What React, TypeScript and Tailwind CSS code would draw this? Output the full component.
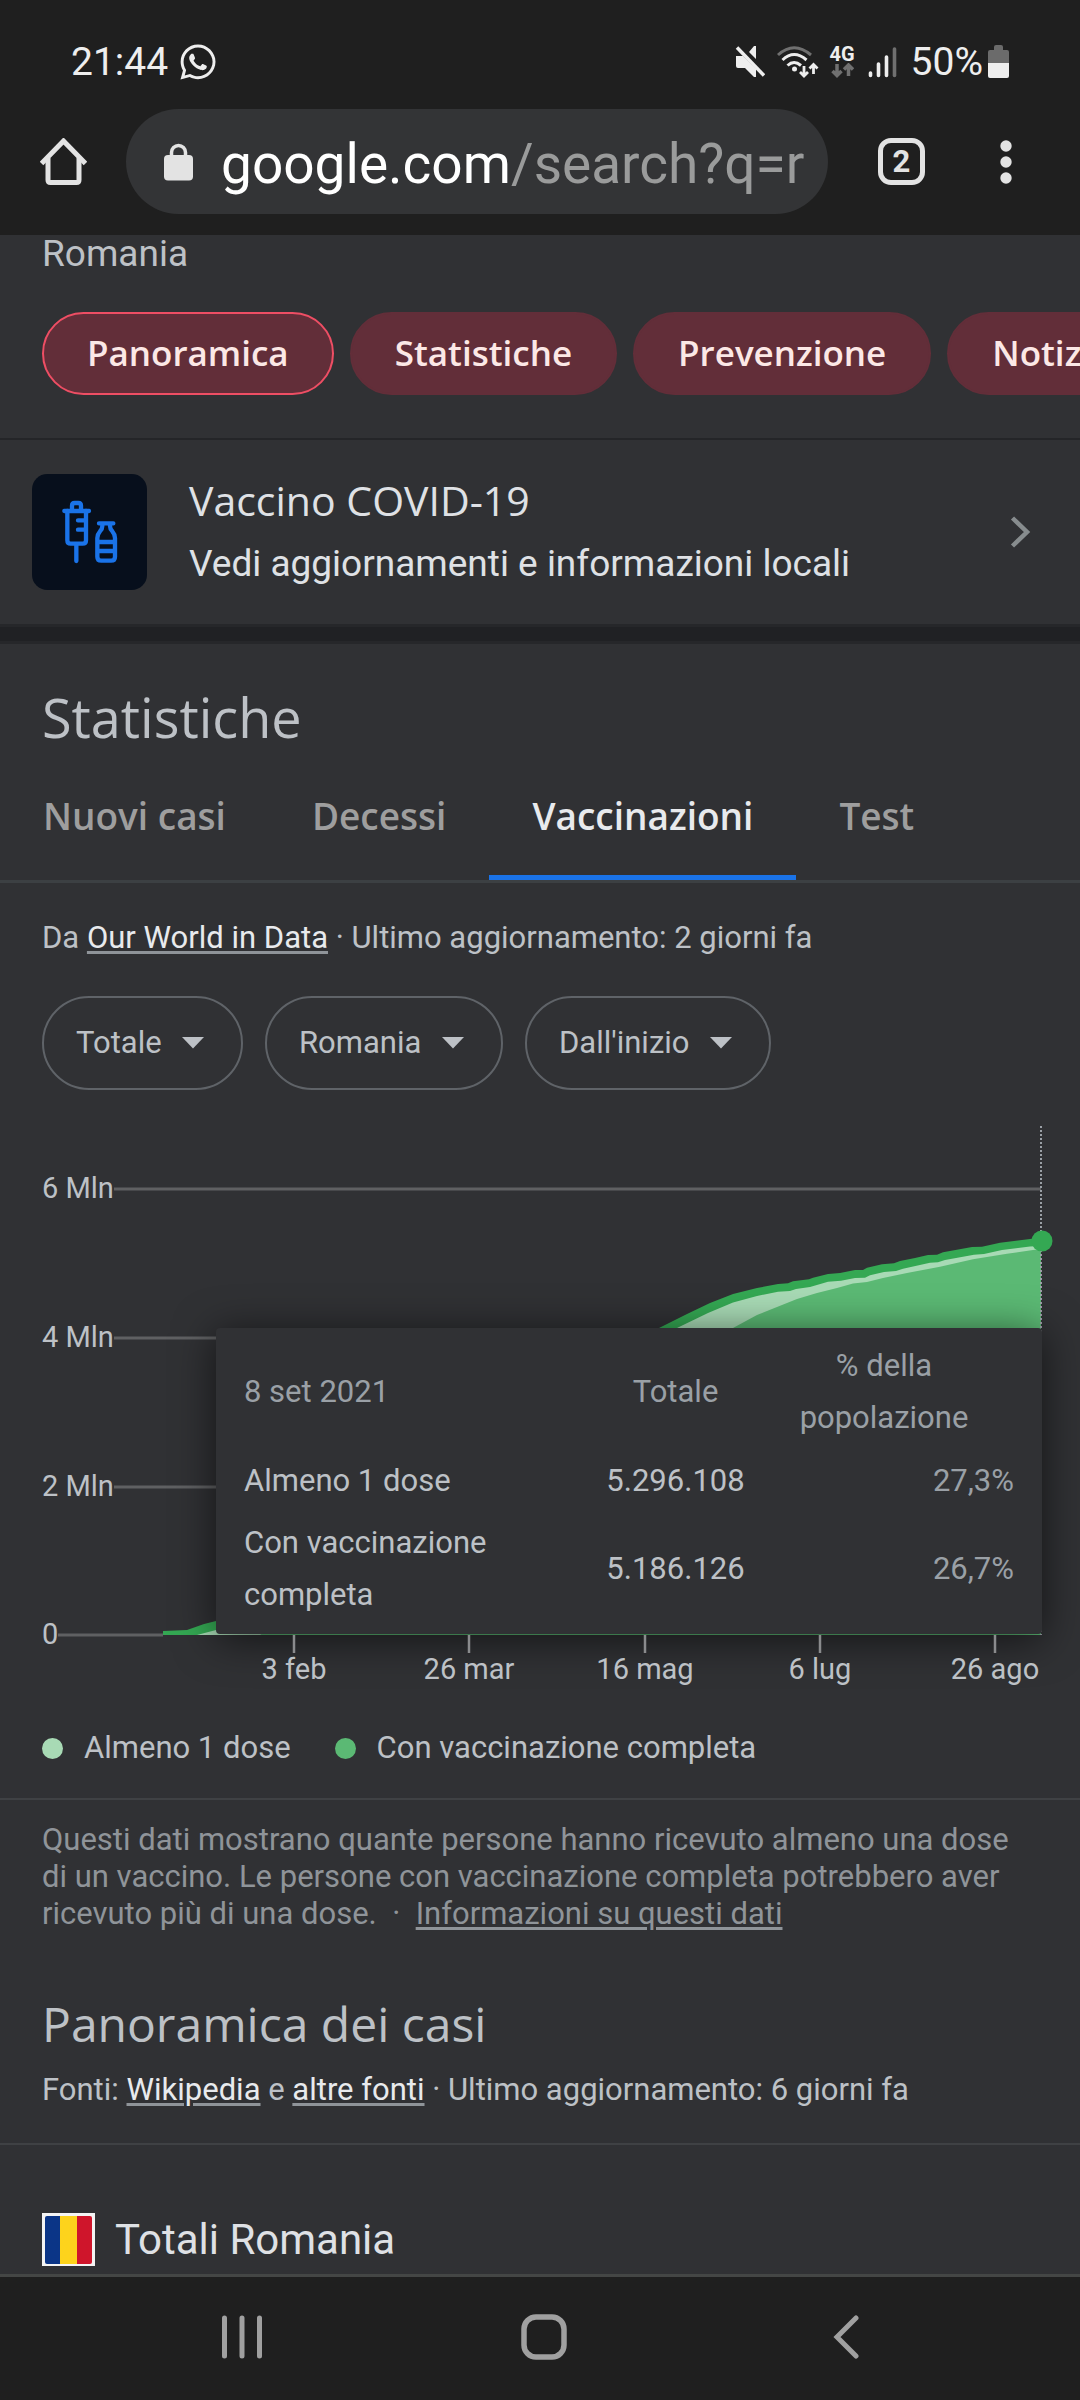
import React from 'react';
import { FaWhatsapp } from 'react-icons/fa';

const chips = ['Panoramica', 'Statistiche', 'Prevenzione', 'Notizie'];
const tabs = ['Nuovi casi', 'Decessi', 'Vaccinazioni', 'Test'];
const filters = [
  { label: 'Metrica', value: 'Totale' },
  { label: 'Area', value: 'Romania' },
  { label: 'Periodo', value: "Dall'inizio" },
];
const gridLines = [
  { label: '6 Mln', y: 99, x: 114 },
  { label: '4 Mln', y: 248, x: 114 },
  { label: '2 Mln', y: 397, x: 114 },
];
const ticks = [
  { label: '3 feb', x: 294 },
  { label: '26 mar', x: 469 },
  { label: '16 mag', x: 645 },
  { label: '6 lug', x: 820 },
  { label: '26 ago', x: 995 },
];

const StatusBar: React.FC = () => (
  <div className="flex items-center pt-10 pb-[25px] pl-[71px] pr-[71px] text-[39px] leading-11 text-[#eeeeee]">
    <span>21:44</span>
    <FaWhatsapp size={40} className="ml-[10px]" />
    <div className="ml-auto flex items-center">
      <svg width="30" height="34" viewBox="736 44 30 34" fill="currentColor">
        <path d="M737 55h7l13 13v8h-2l-9-9h-7a2 2 0 0 1-2-2zM757 45v13l-7-7 5-6z" />
        <path d="M738 46.500l27 28" stroke="currentColor" strokeWidth="3.500" />
      </svg>
      <svg className="ml-3" width="42" height="34" viewBox="778 44 42 34" fill="none" stroke="currentColor" strokeWidth="3">
        <path d="M779 54q16-14.500 33 0" stroke="#707070" />
        <path d="M783.500 59q11.500-11 24 0M788.500 64.500q6.500-6 13.500 0" />
        <circle cx="795.500" cy="68" r="2.500" fill="currentColor" stroke="none" />
        <path d="M805 65v9M801 71l4 4 4-4M814.500 73v-9M810.500 67.500l4-4 4 4" strokeWidth="2.800" />
      </svg>
      <div className="ml-[10px] flex flex-col items-center">
        <span className="text-[20px] font-bold leading-[17px]">4G</span>
        <svg width="24" height="16" viewBox="830 64 24 16" fill="none" stroke="#707070" strokeWidth="3.500">
          <path d="M837 65v11M832.500 72l4.500 4.500 4.500-4.500M848.500 77v-10M844 70.500l4.500-4.500 4.500 4.500" />
        </svg>
      </div>
      <svg className="ml-[13px]" width="29" height="34" viewBox="868 44 29 34" strokeWidth="3.600" strokeLinecap="round" stroke="currentColor">
        <path d="M870.500 72v2.500M878.500 63v11.500M886.500 56v18.500" />
        <path d="M894.500 48v26.500" stroke="#707070" />
      </svg>
      <span className="ml-[14px]">50%</span>
      <svg className="ml-[5px]" width="21" height="34" viewBox="988 44 21 34">
        <path d="M994 49v-3q0-2 2-2h5q2 0 2 2v3h4q2 0 2 2v11h-21V51q0-2 2-2z" fill="#6b6b6b" />
        <path d="M988 62h21v13q0 2-2 2h-17q-2 0-2-2z" fill="currentColor" />
      </svg>
    </div>
  </div>
);

const Toolbar: React.FC = () => (
  <div className="flex items-center pb-[21px] pl-10 pr-[68px] text-[#e3e3e3]">
    <button aria-label="Home" className="shrink-0">
      <svg width="47" height="47" viewBox="0 0 47 47" fill="none" stroke="currentColor" strokeWidth="5" strokeLinejoin="round">
        <path d="M1.500 25.500L23.500 3l22 22.500" strokeLinejoin="miter" />
        <path d="M8 20v22q0 2.500 2.500 2.500h26q2.500 0 2.500-2.500V20" />
      </svg>
    </button>
    <button className="ml-[39px] flex h-[105px] min-w-0 flex-1 items-center rounded-full bg-[#333436] pl-[38px] pr-[22px] text-left">
      <svg className="shrink-0" width="29" height="38" viewBox="0 0 29 38">
        <rect y="12" width="29" height="25.500" rx="4" fill="currentColor" />
        <path d="M7.500 14V9.500a7 7 0 0 1 14 0V14" fill="none" stroke="currentColor" strokeWidth="3.500" />
      </svg>
      <span className="ml-7 overflow-hidden whitespace-nowrap pt-1 text-[55px] leading-[72px] text-[#9a9b9b]">
        <span className="text-white">google.com</span>/search?q=ro
      </span>
    </button>
    <button aria-label="Schede aperte" className="ml-[50px] flex size-[47px] shrink-0 items-center justify-center rounded-[13px] border-5 border-current text-[31px] font-bold leading-none">
      2
    </button>
    <button aria-label="Menu" className="ml-[75px] shrink-0">
      <svg width="12" height="44" viewBox="0 0 12 44" fill="currentColor">
        <circle cx="6" cy="6" r="5.700" />
        <circle cx="6" cy="22" r="5.700" />
        <circle cx="6" cy="38" r="5.700" />
      </svg>
    </button>
  </div>
);

const VaccineCard: React.FC = () => (
  <a href="#" className="flex items-center border-t-2 border-[#242528] py-7 pl-8 pr-[49px] text-[#dfe1e5]">
    <svg className="shrink-0" width="115" height="116" viewBox="96 102 345 348" fill="none" stroke="#1a73e8" strokeWidth="13" strokeLinecap="round" strokeLinejoin="round">
      <rect x="96" y="102" width="345" height="348" rx="46" fill="#070f1c" stroke="none" />
      <path d="M216 213v-16q0-8 8-8h11q8 0 8 8v16M193 213h74" />
      <path d="M202 213v88q0 10 10 10h36q10 0 10-10v-88M258 241h-24M258 269h-24M229 311v52" />
      <path d="M297 250h43M307 250v8q0 9-7 16-8 9-8 20v56q0 12 12 12h29q12 0 12-12v-56q0-11-8-20-7-7-7-16v-8M293 306h52M293 333h52" />
    </svg>
    <div className="ml-[42px] flex-1">
      <div className="font-['Open_Sans',sans-serif] text-[41px] leading-16">Vaccino COVID-19</div>
      <div className="text-[37px] leading-16">Vedi aggiornamenti e informazioni locali</div>
    </div>
    <svg width="21" height="32" viewBox="0 0 21 32" fill="none" stroke="#878c8e" strokeWidth="4.500">
      <path d="M2.500 2l14.500 14-14.500 14" />
    </svg>
  </a>
);

const Chart: React.FC = () => (
  <div className="relative">
    <svg className="block w-full" viewBox="0 0 1080 600" fontSize="29" fill="#bdc1c6">
      <g stroke="#5f6062" strokeWidth="3">
        {gridLines.map((line) => (
          <path key={line.label} d={`M${line.x} ${line.y}H1041`} />
        ))}
        <path d="M58 545H163" />
      </g>
      {gridLines.map((line) => (
        <text key={line.label} x="42" y={line.y + 9}>{line.label}</text>
      ))}
      <text x="42" y="554">0</text>
      <path
        d="M163 541L187 540 204 534 216 531 659 238 687 224 710 213 733 204 757 198 778 194 788 193.300 793 191.300 809 189.300 813 187.700 828 184 840 183 855 180 863 180 867 177.700 882 174.300 894 173.300 900 171 915 168 928 165 937 164.700 943 162.300 972 157 982 156.700 1000 152.700 1030 149 1041 147V545H163z"
        fill="#34a853"
      />
      <path
        d="M197 545L216 540 677 238 708 223 733 212.500 757 206 778 201.700 790 201 796 199 810 197 828 191.700 841 190.700 855 188 865 187.700 870 185.300 884 182 896 181 903 178.700 930 172.700 938 172.300 945 170 974 164.700 984 164 1002 160 1030 156.500 1041 156V545z"
        fill="#a8dab5"
      />
      <path
        d="M260 545L733 238 757 225 777 217 797 209 817 203 837 198 853 193.500 867 192 883 188 907 183 940 176.700 973 169.300 1007 163.700 1033 160 1041 159V545z"
        fill="#5bb974"
      />
      <path d="M1041 36V545" stroke="#9aa0a6" strokeWidth="2" strokeDasharray="2 2" />
      <circle cx="1042" cy="151" r="10.500" fill="#34a853" />
    </svg>
    <div className="absolute top-[238px] left-[20%] right-[38px] rounded-sm bg-[#303134] px-7 pt-3 pb-[13px] shadow-[0_5px_42px_rgba(0,0,0,0.6)]">
      <table className="w-full table-fixed text-[31px] leading-[52px] text-[#bdc1c6]">
        <thead className="text-[#9aa0a6]">
          <tr>
            <th className="text-left font-normal">8 set 2021</th>
            <th className="w-[157px] font-normal">Totale</th>
            <th className="w-[260px] px-4 font-normal">% della popolazione</th>
          </tr>
        </thead>
        <tbody>
          <tr className="h-[73px]">
            <td>Almeno 1 dose</td>
            <td className="text-center">5.296.108</td>
            <td className="text-right text-[#9aa0a6]">27,3%</td>
          </tr>
          <tr>
            <td>Con vaccinazione completa</td>
            <td className="text-center">5.186.126</td>
            <td className="text-right text-[#9aa0a6]">26,7%</td>
          </tr>
        </tbody>
      </table>
    </div>
    <svg className="absolute inset-0 w-full pointer-events-none" viewBox="0 0 1080 600" fontSize="29" fill="#bdc1c6" textAnchor="middle">
      {ticks.map((tick) => (
        <g key={tick.label}>
          <path d={`M${tick.x} 545v18`} stroke="#8a8b8d" strokeWidth="2.500" />
          <text x={tick.x} y="589">{tick.label}</text>
        </g>
      ))}
    </svg>
  </div>
);

const Statistics: React.FC = () => (
  <section>
    <h2 className="px-[42px] pt-9 font-['Open_Sans',sans-serif] text-[54px] leading-[74px]">Statistiche</h2>
    <div role="tablist" className="flex border-b-3 border-[#3c4043] font-['Open_Sans',sans-serif] text-[37px] font-semibold leading-[51px]">
      {tabs.map((tab) => (
        <button
          key={tab}
          role="tab"
          aria-selected={tab === 'Vaccinazioni'}
          className={
            tab === 'Vaccinazioni'
              ? 'border-b-5 border-[#1a73e8] px-[43px] pt-9 pb-[34px] text-[#e8eaed]'
              : 'border-b-5 border-transparent px-[43px] pt-9 pb-[34px] text-[#9e9e9e]'
          }
        >
          {tab}
        </button>
      ))}
    </div>
    <p className="px-[42px] pt-[33px] text-[31px] leading-11">
      Da <SourceLink>Our World in Data</SourceLink> · Ultimo aggiornamento: 2 giorni fa
    </p>
    <div className="mt-9 flex gap-[22px] px-[42px]">
      {filters.map((filter) => (
        <label key={filter.label} className="flex h-[94px] items-center rounded-full border-2 border-[#5f6368] pl-8 pr-[37px]">
          <select aria-label={filter.label} className="appearance-none bg-transparent text-[31px] leading-11">
            <option>{filter.value}</option>
          </select>
          <svg className="ml-5" width="22" height="12" viewBox="0 0 22 12" fill="currentColor">
            <path d="M0 0h22L11 11.500z" />
          </svg>
        </label>
      ))}
    </div>
    <Chart />
    <div className="flex items-center border-b-2 border-[#3f4144] px-[42px] pt-9 pb-7 text-[31px] leading-11">
      <span className="size-[21px] rounded-full bg-[#a8dab5]" />
      <span className="ml-[21px]">Almeno 1 dose</span>
      <span className="ml-11 size-[21px] rounded-full bg-[#5bb974]" />
      <span className="ml-[21px]">Con vaccinazione completa</span>
    </div>
    <p className="px-[42px] pt-[21px] text-[31px] leading-[37px] text-[#8f9499]">
      Questi dati mostrano quante persone hanno ricevuto almeno una dose di un vaccino. Le persone con
      vaccinazione completa potrebbero aver ricevuto più di una dose. &nbsp;·&nbsp;{' '}
      <a href="#" className="underline decoration-3 underline-offset-3">Informazioni su questi dati</a>
    </p>
  </section>
);

const SourceLink: React.FC<{ children: React.ReactNode }> = ({ children }) => (
  <a href="#" className="text-[#e8eaed] underline decoration-[#8f9499] decoration-3 underline-offset-3">
    {children}
  </a>
);

const CasesOverview: React.FC = () => (
  <section>
    <div className="border-b-2 border-[#3f4144] px-[42px] pt-[60px] pb-[31px]">
      <h2 className="font-['Open_Sans',sans-serif] text-[48px] leading-16">Panoramica dei casi</h2>
      <p className="pt-3 text-[31px] leading-11">
        Fonti: <SourceLink>Wikipedia</SourceLink> e <SourceLink>altre fonti</SourceLink> · Ultimo aggiornamento: 6 giorni fa
      </p>
    </div>
    <div className="flex items-center px-[42px] pt-[68px] pb-2">
      <svg width="53" height="53" viewBox="0 0 53 53">
        <path d="M0 0h53v53H0z" fill="#f4f4f4" />
        <path d="M5 3h13v48H5q-2 0-2-2V5q0-2 2-2z" fill="#0b3587" />
        <path d="M18 3h17v48H18z" fill="#fdd31c" />
        <path d="M35 3h13q2 0 2 2v44q0 2-2 2H35z" fill="#cf152b" />
      </svg>
      <h3 className="ml-5 text-[42px] leading-[53px] text-[#dfe1e5]">Totali Romania</h3>
    </div>
  </section>
);

const SystemNav: React.FC = () => (
  <nav className="grid h-[126px] grid-cols-3 place-items-center border-t-3 border-[#444645] bg-[#1f1f1f] pr-[83px] pl-[91px] pb-1 text-[#a0a0a0]">
    <button aria-label="Recenti">
      <svg width="42" height="44" viewBox="0 0 42 44" stroke="currentColor" strokeWidth="5" strokeLinecap="round">
        <path d="M3.500 3v38M21 3v38M38.500 3v38" />
      </svg>
    </button>
    <button aria-label="Home di sistema">
      <svg width="46" height="46" viewBox="0 0 46 46" fill="none" stroke="currentColor" strokeWidth="5.500">
        <rect x="3" y="3" width="40" height="40" rx="12" />
      </svg>
    </button>
    <button aria-label="Indietro">
      <svg width="26" height="44" viewBox="0 0 26 44" fill="none" stroke="currentColor" strokeWidth="5" strokeLinecap="round">
        <path d="M23 3L4 22l19 19" />
      </svg>
    </button>
  </nav>
);

const App: React.FC = () => {
  return (
    <div className="flex min-h-screen flex-col overflow-hidden bg-[#303134] font-[Roboto,sans-serif] text-[#bdc1c6]">
      <header className="bg-[#1f1f1f]">
        <StatusBar />
        <Toolbar />
      </header>
      <main className="flex-1">
        <div className="px-[42px] text-[37px] leading-[37px]">Romania</div>
        <div className="mt-10 mb-[43px] flex gap-4 overflow-hidden pl-[42px] font-['Open_Sans',sans-serif] text-[35px] font-semibold text-[#fce8e6]">
          {chips.map((chip) => (
            <button
              key={chip}
              className={
                chip === 'Panoramica'
                  ? 'h-[83px] shrink-0 rounded-full border-2 border-[#ee4e64] bg-[#622e39] px-[43px]'
                  : 'h-[83px] shrink-0 rounded-full border-2 border-[#622e39] bg-[#622e39] px-[43px]'
              }
            >
              {chip}
            </button>
          ))}
        </div>
        <VaccineCard />
        <div className="h-5 border-y-3 border-[#26272a] bg-[#202124]" />
        <Statistics />
        <CasesOverview />
      </main>
      <SystemNav />
    </div>
  );
};

export default App;
